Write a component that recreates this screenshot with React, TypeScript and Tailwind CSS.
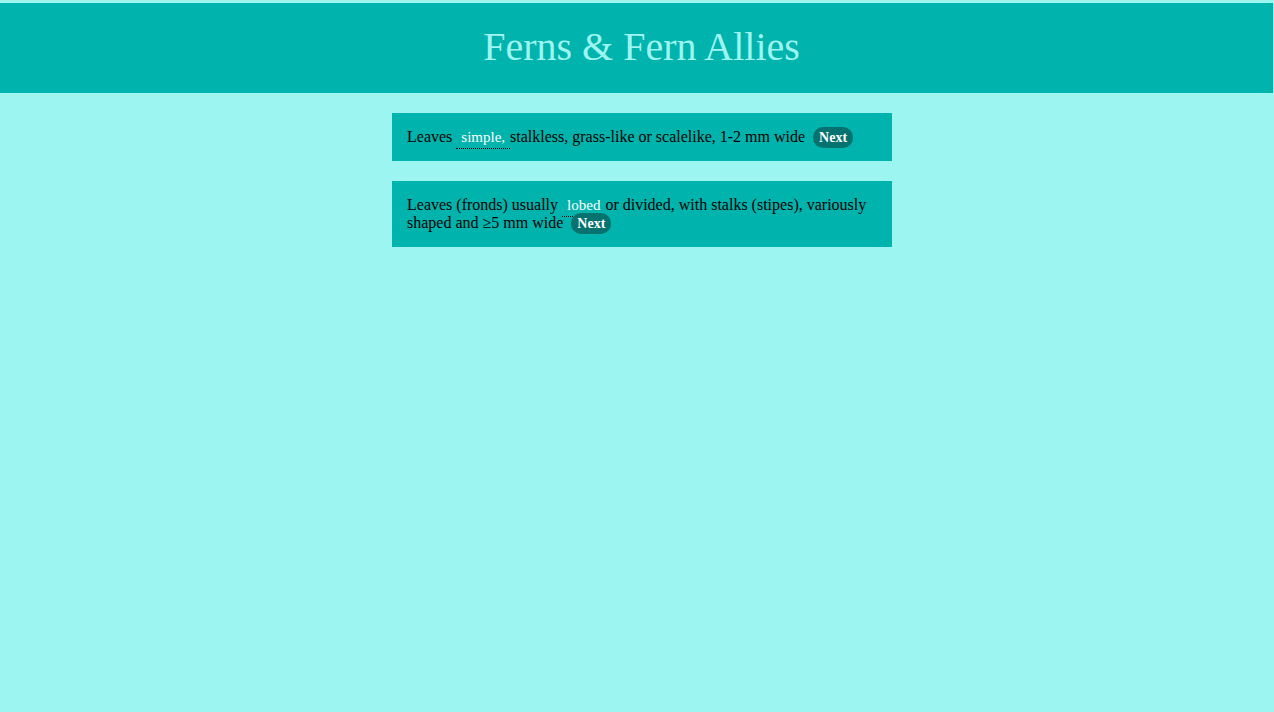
import React from 'react';

const Gloss = ({ children }: { children: React.ReactNode }) => (
    <span className="text-white text-[15px] leading-none px-[5px] pb-[3px] border-b border-dotted border-black">{children}</span>
);

const NextButton = () => (
    <span className="ml-[4px] bg-[#04736f] text-white font-bold text-[14px] leading-none px-[6px] py-[3px] rounded-[10px] cursor-pointer">Next</span>
);

const App = () => {
    return (
        <div className="min-h-[712px] bg-[#9cf5f0] pt-[3px] font-['Liberation_Serif',serif] text-black">
            <div className="mr-px h-[90px] bg-[#00b3ac] flex items-center justify-center pl-[10px]">
                <h1 className="text-[40px] text-[#9cf5f0] leading-none -mt-[2px]">Ferns &amp; Fern Allies</h1>
            </div>
            <div className="flex flex-col items-center gap-5 pt-5 pl-[10px]">
                <div className="w-[500px] bg-[#00b3ac] px-[15px] py-[15px] text-[16px] leading-[18px]">
                    Leaves <Gloss>simple,</Gloss>stalkless, grass-like or scalelike, 1-2 mm wide <NextButton />
                </div>
                <div className="w-[500px] bg-[#00b3ac] px-[15px] py-[15px] text-[16px] leading-[18px]">
                    Leaves (fronds) usually <Gloss>lobed</Gloss>or divided, with stalks (stipes), variously shaped and ≥5 mm wide <NextButton />
                </div>
            </div>
        </div>
    );
};

export default App;
